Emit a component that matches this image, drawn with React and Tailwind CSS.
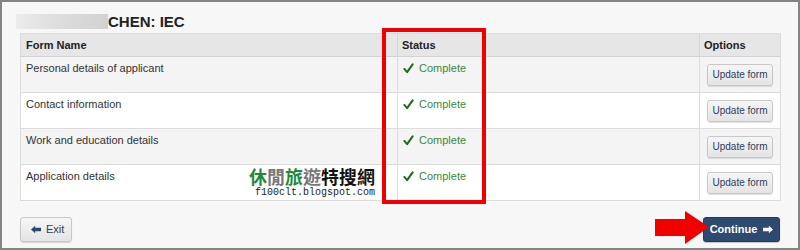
import React from "react";

const rows = [
    "Personal details of applicant",
    "Contact information",
    "Work and education details",
    "Application details",
];

const ArrowLeft = ({ className }) => (
    <svg className={className} viewBox="0 0 12 10" fill="currentColor">
        <path d="M0 5 L5 0.5 L5 3 L12 3 L12 7 L5 7 L5 9.5 Z" />
    </svg>
);

const ArrowRight = ({ className }) => (
    <svg className={className} viewBox="0 0 12 10" fill="currentColor">
        <path d="M12 5 L7 0.5 L7 3 L0 3 L0 7 L7 7 L7 9.5 Z" />
    </svg>
);

const Check = () => (
    <svg className="w-[11px] h-[11px] text-[#1f6b1f]" viewBox="0 0 12 12" fill="none" stroke="currentColor" strokeWidth="2.2" strokeLinecap="round" strokeLinejoin="round">
        <path d="M1.5 6.5 L4.5 10 L10.5 1.5" />
    </svg>
);

export default function App() {
    return (
        <div className="relative w-[800px] h-[250px] border-2 border-[#858585] bg-[#f7f7f7] font-['Liberation_Sans',Arial,sans-serif] text-[#333] overflow-hidden">
            {/* Title */}
            <div className="flex items-center pl-[14px] pt-[7px] h-[31px]">
                <div className="w-[92px] h-[15px] bg-gradient-to-r from-[#ececec] via-[#dcdcdc] to-[#d2d2d2]" />
                <h1 className="text-[15px] font-bold text-[#222] leading-none">CHEN: IEC</h1>
            </div>

            {/* Forms table */}
            <div className="px-[18px]">
                <table className="w-[760px] table-fixed border-collapse border border-[#dcdcdc] text-[11px]">
                    <colgroup>
                        <col className="w-[377px]" />
                        <col className="w-[302px]" />
                        <col className="w-[81px]" />
                    </colgroup>
                    <thead>
                        <tr className="h-[23px] bg-[#e6e6e6] border-b border-[#d2d2d2]">
                            <th className="text-left font-bold text-[#222] px-[5px]">Form Name</th>
                            <th className="text-left font-bold text-[#222] px-[4px] border-l border-[#d6d6d6]">Status</th>
                            <th className="text-left font-bold text-[#222] px-[4px] border-l border-[#d6d6d6]">Options</th>
                        </tr>
                    </thead>
                    <tbody>
                        {rows.map((name, i) => (
                            <tr key={name} className={`h-[36px] border-t border-[#dcdcdc] ${i % 2 === 0 ? "bg-[#f4f4f4]" : "bg-white"}`}>
                                <td className="align-top px-[5px] pt-[4px] leading-[14px]">{name}</td>
                                <td className="align-top px-[5px] pt-[4px] border-l border-[#dcdcdc]">
                                    <div className="flex items-center gap-[5px] leading-[14px] text-[#3a8a3a]">
                                        <Check />
                                        <span>Complete</span>
                                    </div>
                                </td>
                                <td className="align-middle px-[7px] border-l border-[#dcdcdc]">
                                    <button className="w-[66px] h-[22px] rounded-[3px] border border-[#c8c8c8] bg-gradient-to-b from-[#f6f6f6] to-[#e4e4e4] shadow-[0_1px_1px_rgba(0,0,0,0.12)] text-[10px] text-[#2c3e5a]">
                                        Update form
                                    </button>
                                </td>
                            </tr>
                        ))}
                    </tbody>
                </table>

                {/* Footer buttons */}
                <div className="flex justify-between mt-[16px]">
                    <button className="flex items-center gap-[5px] w-[52px] h-[25px] pl-[10px] rounded-[3px] border border-[#c8c8c8] bg-gradient-to-b from-[#f6f6f6] to-[#e4e4e4] shadow-[0_1px_1px_rgba(0,0,0,0.12)] text-[11px] text-[#2c3e5a]">
                        <ArrowLeft className="w-[10px] h-[9px] text-[#2b4a6f]" />
                        <span>Exit</span>
                    </button>
                    <button className="flex items-center justify-center gap-[6px] w-[77px] h-[25px] rounded-[3px] border border-[#22395a] bg-[#2d4b70] text-[11px] font-bold text-white shadow-[0_1px_1px_rgba(0,0,0,0.2)]">
                        <span>Continue</span>
                        <ArrowRight className="w-[10px] h-[9px]" />
                    </button>
                </div>
            </div>

            {/* Highlight box over the status column */}
            <div className="absolute left-[380px] top-[26px] w-[104px] h-[176px] border-4 border-[#f20000]" />

            {/* Pointer arrow at Continue */}
            <svg className="absolute left-[653px] top-[209px] w-[54px] h-[34px]" viewBox="0 0 54 34">
                <path d="M0 8 L30 8 L30 0 L54 16 L30 33 L30 25 L0 25 Z" fill="#f20000" />
            </svg>

            {/* Watermark */}
            <div className="absolute left-[247px] top-[165px] flex flex-col items-end gap-[1px]">
                <div className="text-[18px] font-bold leading-[19px] font-['Noto_Sans_CJK_TC',sans-serif]">
                    <span className="text-[#1f8a3c]">休</span>
                    <span className="text-[#777]">閒</span>
                    <span className="text-[#1f8a3c]">旅</span>
                    <span className="text-[#777]">遊</span>
                    <span className="text-[#111]">特搜網</span>
                </div>
                <div className="text-[10px] leading-[11px] text-[#222] font-['Liberation_Mono',monospace]">f100clt.blogspot.com</div>
            </div>
        </div>
    );
}
